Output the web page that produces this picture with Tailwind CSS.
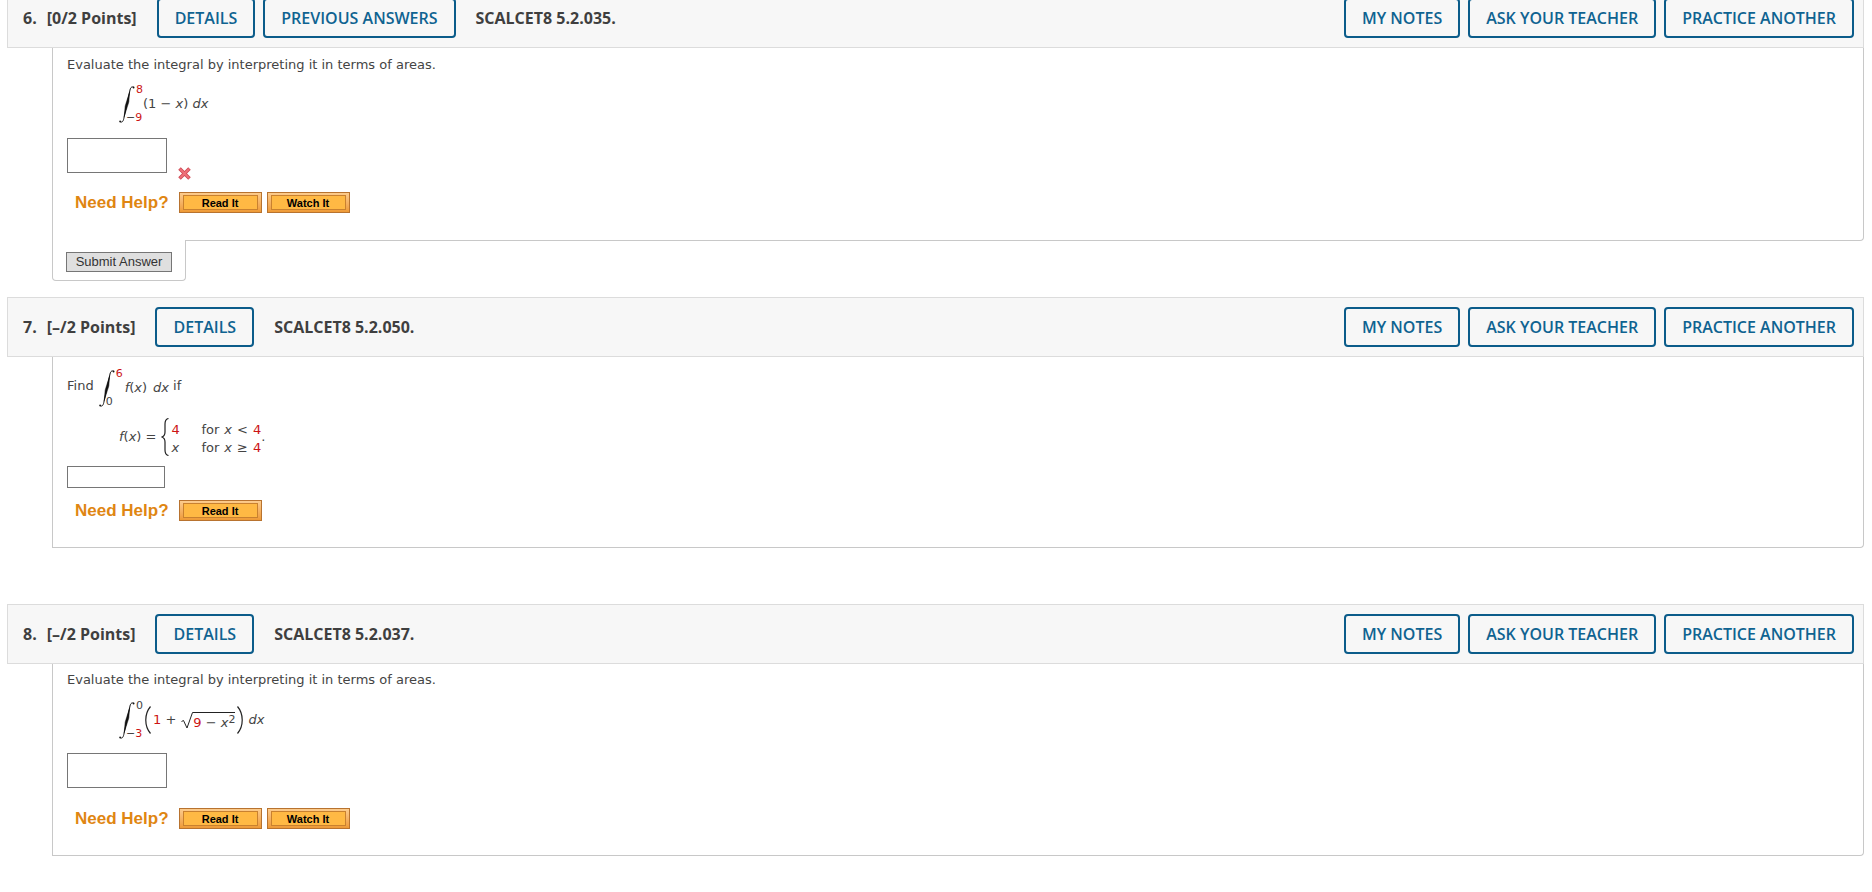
<!DOCTYPE html>
<html lang="en">
<head>
<meta charset="utf-8">
<title>Assignment</title>
<script src="https://cdn.jsdelivr.net/npm/@tailwindcss/browser@4"></script>
</head>
<body class="bg-white pl-[7px] pr-2 font-['DejaVu_Sans',sans-serif] text-[13px] leading-4 text-[#444]">
<svg class="hidden" aria-hidden="true">
  <symbol id="integral" viewBox="0 0 16 37"><path d="M15 1.500C13 .2 11.600 1.200 11 4L4.800 32.500C4.200 35.500 3 36.800 1 35.600" fill="none" stroke="#111" stroke-width="1"/><path d="M10.600 6L9.800 16L5.200 30.500L6.200 20Z" fill="#111" stroke="#111" stroke-width=".5"/><circle cx="14.600" cy="1.500" r=".9" fill="#111"/><circle cx="1.100" cy="35.400" r=".9" fill="#111"/></symbol>
</svg>
<main class="-mt-3 flex flex-col">

  <section>
    <header class="flex items-center justify-between border border-[#dcdcdc] bg-[#f7f7f7] py-[9px] pr-[9px] pl-[15px] font-['Open_Sans',sans-serif] text-base leading-6">
      <div class="flex items-center">
        <h2 class="flex gap-[10px] font-bold text-[#3f3f3f]"><span>6.</span><span>[0/2 Points]</span></h2>
        <button class="ml-5 h-10 rounded border-2 border-[#0b5c8a] px-4 font-semibold text-[#0f6391]">DETAILS</button>
        <button class="ml-2 h-10 rounded border-2 border-[#0b5c8a] px-4 font-semibold text-[#0f6391]">PREVIOUS ANSWERS</button>
        <span class="ml-5 font-bold text-[#3f3f3f]">SCALCET8 5.2.035.</span>
      </div>
      <div class="flex gap-2 font-semibold text-[#0f6391]">
        <button class="h-10 rounded border-2 border-[#0b5c8a] px-4">MY NOTES</button>
        <button class="h-10 rounded border-2 border-[#0b5c8a] px-4">ASK YOUR TEACHER</button>
        <button class="h-10 rounded border-2 border-[#0b5c8a] px-4">PRACTICE ANOTHER</button>
      </div>
    </header>
    <div class="ml-[45px] flex h-[193px] flex-col items-start rounded-br border-r border-b border-l border-[#c8c8c8] pt-[9px] pl-[14px]">
      <p>Evaluate the integral by interpreting it in terms of areas.</p>
      <div class="mt-3 ml-[52px] flex h-[38px] items-center">
        <svg class="h-[37px] w-4"><use href="#integral"/></svg>
        <div class="-ml-[9px] flex h-[38px] flex-col justify-between text-[11px] leading-[10px]">
          <span class="pl-[10px] text-[#cc1414]">8</span>
          <span>−<span class="text-[#cc1414]">9</span></span>
        </div>
        <span>(1 − <i>x</i>) <i>dx</i></span>
      </div>
      <div class="mt-[15px] flex items-start">
        <input aria-label="Answer to question 6" class="h-[35px] w-[100px] border border-[#767676]">
        <svg class="mt-[29px] ml-[11px] size-[13px]" viewBox="0 0 13 13" role="img" aria-label="Incorrect"><path d="M1.500 1.500L11.500 11.500M11.500 1.500L1.500 11.500" stroke="#cf4a55" stroke-width="3.600"/><path d="M2 2L11 11M11 2L2 11" stroke="#ee7078" stroke-width="1.800"/></svg>
      </div>
      <div class="mt-3 flex items-center pl-2 font-['Liberation_Sans',sans-serif]">
        <span class="mr-[10px] text-[17px] leading-5 font-bold text-[#df8612]">Need Help?</span>
        <button class="h-[21px] w-[83px] border border-[#b8732f] bg-linear-to-b from-[#fccb8c] to-[#ee9a35] px-[3px] py-0.5 text-[11px] leading-[11px] font-bold text-black"><span class="flex h-full items-center justify-center border border-[#c9812f] bg-[#ffb944] pt-px">Read It</span></button>
        <button class="ml-[5px] h-[21px] w-[83px] border border-[#b8732f] bg-linear-to-b from-[#fccb8c] to-[#ee9a35] px-[3px] py-0.5 text-[11px] leading-[11px] font-bold text-black"><span class="flex h-full items-center justify-center border border-[#c9812f] bg-[#ffb944] pt-px">Watch It</span></button>
      </div>
    </div>
    <div class="relative -mt-px ml-[45px] flex h-[41px] w-[134px] items-start rounded-b border-x border-b border-[#c8c8c8] bg-white pt-3 pl-[13px]">
      <button class="h-5 w-[106px] border border-[#767676] bg-[#dfdfdf] font-['Liberation_Sans',sans-serif] text-[13px] leading-4 text-[#333]">Submit Answer</button>
    </div>
  </section>

  <section class="mt-4">
    <header class="flex items-center justify-between border border-[#dcdcdc] bg-[#f7f7f7] py-[9px] pr-[9px] pl-[15px] font-['Open_Sans',sans-serif] text-base leading-6">
      <div class="flex items-center">
        <h2 class="flex gap-[10px] font-bold text-[#3f3f3f]"><span>7.</span><span>[–/2 Points]</span></h2>
        <button class="ml-5 h-10 rounded border-2 border-[#0b5c8a] px-4 font-semibold text-[#0f6391]">DETAILS</button>
        <span class="ml-5 font-bold text-[#3f3f3f]">SCALCET8 5.2.050.</span>
      </div>
      <div class="flex gap-2 font-semibold text-[#0f6391]">
        <button class="h-10 rounded border-2 border-[#0b5c8a] px-4">MY NOTES</button>
        <button class="h-10 rounded border-2 border-[#0b5c8a] px-4">ASK YOUR TEACHER</button>
        <button class="h-10 rounded border-2 border-[#0b5c8a] px-4">PRACTICE ANOTHER</button>
      </div>
    </header>
    <div class="ml-[45px] flex h-[191px] flex-col items-start rounded-br border-r border-b border-l border-[#c8c8c8] pt-3 pl-[14px]">
      <div class="flex h-[38px] items-center">
        <span class="pb-1">Find</span>
        <svg class="ml-[5px] h-[37px] w-4"><use href="#integral"/></svg>
        <div class="-ml-[9px] flex h-[38px] flex-col justify-between text-[11px] leading-[10px]">
          <span class="pl-[10px] text-[#cc1414]">6</span>
          <span>0</span>
        </div>
        <span class="ml-0.5 flex gap-1.5"><span><i>f</i>(<i>x</i>)</span><i>dx</i></span><span class="ml-1 pb-1">if</span>
      </div>
      <div class="mt-[11px] ml-[52px] flex h-[38px] items-center">
        <span><i>f</i>(<i>x</i>) =</span>
        <svg class="ml-[5px] h-[38px] w-2" viewBox="0 0 8 38"><path d="M7.500 .5C4.500 1 4 3 4 6V14C4 17 3 18.500 .5 19C3 19.500 4 21 4 24V32C4 35 4.500 37 7.500 37.500" fill="none" stroke="#222" stroke-width="1.200"/></svg>
        <div class="ml-0.5 grid grid-cols-[30px_auto] pt-[3px] leading-[18px]">
          <span class="text-[#cc1414]">4</span><span class="flex gap-[5px]"><span>for</span><i>x</i><span>&lt;</span><span class="text-[#cc1414]">4</span></span>
          <i>x</i><span class="flex gap-[5px]"><span>for</span><i>x</i><span>≥</span><span class="text-[#cc1414]">4</span></span>
        </div>
        <span>.</span>
      </div>
      <input aria-label="Answer to question 7" class="mt-[10px] h-[22px] w-[98px] border border-[#767676]">
      <div class="mt-3 flex items-center pl-2 font-['Liberation_Sans',sans-serif]">
        <span class="mr-[10px] text-[17px] leading-5 font-bold text-[#df8612]">Need Help?</span>
        <button class="h-[21px] w-[83px] border border-[#b8732f] bg-linear-to-b from-[#fccb8c] to-[#ee9a35] px-[3px] py-0.5 text-[11px] leading-[11px] font-bold text-black"><span class="flex h-full items-center justify-center border border-[#c9812f] bg-[#ffb944] pt-px">Read It</span></button>
      </div>
    </div>
  </section>

  <section class="mt-14">
    <header class="flex items-center justify-between border border-[#dcdcdc] bg-[#f7f7f7] py-[9px] pr-[9px] pl-[15px] font-['Open_Sans',sans-serif] text-base leading-6">
      <div class="flex items-center">
        <h2 class="flex gap-[10px] font-bold text-[#3f3f3f]"><span>8.</span><span>[–/2 Points]</span></h2>
        <button class="ml-5 h-10 rounded border-2 border-[#0b5c8a] px-4 font-semibold text-[#0f6391]">DETAILS</button>
        <span class="ml-5 font-bold text-[#3f3f3f]">SCALCET8 5.2.037.</span>
      </div>
      <div class="flex gap-2 font-semibold text-[#0f6391]">
        <button class="h-10 rounded border-2 border-[#0b5c8a] px-4">MY NOTES</button>
        <button class="h-10 rounded border-2 border-[#0b5c8a] px-4">ASK YOUR TEACHER</button>
        <button class="h-10 rounded border-2 border-[#0b5c8a] px-4">PRACTICE ANOTHER</button>
      </div>
    </header>
    <div class="ml-[45px] flex h-[192px] flex-col items-start rounded-br border-r border-b border-l border-[#c8c8c8] pt-2 pl-[14px]">
      <p>Evaluate the integral by interpreting it in terms of areas.</p>
      <div class="mt-[13px] ml-[52px] flex h-[38px] items-center">
        <svg class="h-[37px] w-4"><use href="#integral"/></svg>
        <div class="-ml-[9px] flex h-[38px] flex-col justify-between text-[11px] leading-[10px]">
          <span class="pl-[10px]">0</span>
          <span>−<span class="text-[#cc1414]">3</span></span>
        </div>
        <svg class="ml-0.5 h-7 w-[6px]" viewBox="0 0 6 28"><path d="M5.500 .5C-.8 8-.8 20 5.500 27.500" fill="none" stroke="#222" stroke-width="1.200"/></svg>
        <span class="ml-0.5"><span class="text-[#cc1414]">1</span> +</span>
        <svg class="ml-[5px] h-[17px] w-3" viewBox="0 0 12 17"><path d="M.5 9.500L2.500 8.500L6 16L11.500 .5H12" fill="none" stroke="#222"/></svg>
        <span class="flex h-[17px] border-t border-[#222] pt-0.5"><span><span class="text-[#cc1414]">9</span> − <i>x</i></span><span class="text-[11px] leading-[10px]">2</span></span>
        <svg class="ml-0.5 h-7 w-[6px]" viewBox="0 0 6 28"><path d="M.5 .5C6.800 8 6.800 20 .5 27.500" fill="none" stroke="#222" stroke-width="1.200"/></svg>
        <i class="ml-[5px]">dx</i>
      </div>
      <input aria-label="Answer to question 8" class="mt-[14px] h-[35px] w-[100px] border border-[#767676]">
      <div class="mt-5 flex items-center pl-2 font-['Liberation_Sans',sans-serif]">
        <span class="mr-[10px] text-[17px] leading-5 font-bold text-[#df8612]">Need Help?</span>
        <button class="h-[21px] w-[83px] border border-[#b8732f] bg-linear-to-b from-[#fccb8c] to-[#ee9a35] px-[3px] py-0.5 text-[11px] leading-[11px] font-bold text-black"><span class="flex h-full items-center justify-center border border-[#c9812f] bg-[#ffb944] pt-px">Read It</span></button>
        <button class="ml-[5px] h-[21px] w-[83px] border border-[#b8732f] bg-linear-to-b from-[#fccb8c] to-[#ee9a35] px-[3px] py-0.5 text-[11px] leading-[11px] font-bold text-black"><span class="flex h-full items-center justify-center border border-[#c9812f] bg-[#ffb944] pt-px">Watch It</span></button>
      </div>
    </div>
  </section>
</main>
</body>
</html>
